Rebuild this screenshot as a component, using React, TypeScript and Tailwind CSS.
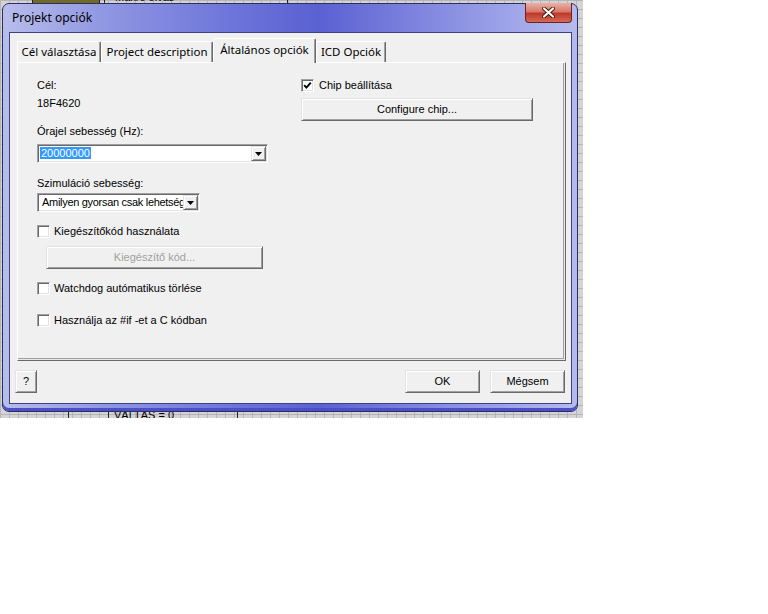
import React from "react";

function Check({ checked }: { checked?: boolean }) {
  return (
    <span className="w-[13px] h-[13px] shrink-0 bg-white border border-t-[#a0a0a0] border-l-[#a0a0a0] border-r-white border-b-white shadow-[inset_1px_1px_0_#696969,inset_-1px_-1px_0_#e3e3e3] flex items-center justify-center">
      {checked && (
        <svg width="9" height="9" viewBox="0 0 9 9">
          <path d="M1.2 4.2 L3.4 6.6 L7.8 1.6" fill="none" stroke="#000" strokeWidth="1.9" />
        </svg>
      )}
    </span>
  );
}

function Btn({
  children,
  className = "",
  disabled,
}: {
  children: React.ReactNode;
  className?: string;
  disabled?: boolean;
}) {
  return (
    <div
      className={`flex items-center justify-center bg-[#f0f0f0] border border-t-[#e3e3e3] border-l-[#e3e3e3] border-r-[#696969] border-b-[#696969] shadow-[inset_1px_1px_0_#ffffff,inset_-1px_-1px_0_#a0a0a0] text-[11px] leading-[13px] ${
        disabled ? "text-[#a0a0a0]" : "text-black"
      } ${className}`}
    >
      {children}
    </div>
  );
}

function DropBtn() {
  return (
    <div className="w-[15px] h-[15px] shrink-0 flex items-center justify-center bg-[#f0f0f0] border border-t-[#e3e3e3] border-l-[#e3e3e3] border-r-[#696969] border-b-[#696969] shadow-[inset_1px_1px_0_#ffffff,inset_-1px_-1px_0_#a0a0a0]">
      <svg width="7" height="4" viewBox="0 0 7 4">
        <path d="M0 0 H7 L3.5 4 Z" fill="#000" />
      </svg>
    </div>
  );
}

function Combo({ children, className = "" }: { children: React.ReactNode; className?: string }) {
  return (
    <div
      className={`h-[19px] bg-white border border-t-[#a0a0a0] border-l-[#a0a0a0] border-r-white border-b-white shadow-[inset_1px_1px_0_#696969,inset_-1px_-1px_0_#e3e3e3] flex items-center pl-[2px] pr-[1px] ${className}`}
    >
      <div className="flex-1 min-w-0 overflow-hidden whitespace-nowrap text-[11px] leading-[13px] text-black">
        {children}
      </div>
      <DropBtn />
    </div>
  );
}

function Tab({ label, w, active }: { label: string; w: string; active?: boolean }) {
  return (
    <div
      className={`${w} flex items-center justify-center bg-[#f0f0f0] border-t border-l border-t-white border-l-white border-r border-r-[#696969] shadow-[inset_-1px_0_0_#a0a0a0] rounded-t-[2px] text-[11.5px] text-black whitespace-nowrap ${
        active ? "h-[25px] -mb-px relative z-10 pb-[3px]" : "h-[21px]"
      }`}
    >
      {label}
    </div>
  );
}

export default function App() {
  const ui = "font-['Liberation_Sans',Arial,sans-serif]";
  const seg = "font-['Noto_Sans',sans-serif]";
  return (
    <div className="w-[768px] h-[614px] bg-white">
      <div className="relative w-[583px] h-[418px] overflow-hidden bg-[#d4d4d6] bg-[linear-gradient(#b4b4ba_1px,transparent_1px),linear-gradient(90deg,#b4b4ba_1px,transparent_1px)] bg-[length:9px_9px]">
        {/* canvas items behind the dialog */}
        <div className="absolute left-[32px] top-[-10px] w-[68px] h-[14px] bg-[#6f6a2a] border border-[#222]" />
        <div className="absolute left-[104px] top-[-10px] w-[120px] h-[14px] border-l border-[#222]" />
        <div className={`absolute left-[115px] top-[-8px] text-[11px] leading-[11px] text-black ${ui}`}>
          Makró olvas
        </div>
        <div className="absolute left-[287px] top-[-10px] h-[14px] border-l border-[#222]" />
        <div className="absolute left-[68px] top-[408px] h-[12px] border-l border-[#222]" />
        <div className="absolute left-[108px] top-[408px] h-[12px] border-l border-[#222]" />
        <div className="absolute left-[237px] top-[408px] h-[12px] border-l border-[#222]" />
        <div className={`absolute left-[114px] top-[410px] text-[11px] leading-[11px] text-black ${ui}`}>
          VÁLTÁS = 0
        </div>

        {/* dialog window */}
        <div className="absolute left-[2px] top-[3px] w-[576px] h-[409px] rounded-[7px] border border-[#2c2f5c] bg-[linear-gradient(90deg,#b7bdeb_0%,#8f96e2_18%,#6d75da_40%,#5a61d2_55%,#8e94e3_80%,#b6bbee_100%)] flex flex-col pl-[6px] pr-[5px] pb-[7px] shadow-[inset_0_-3px_0_#4b50c8]">
          <div className="h-[28px] shrink-0 flex items-center relative">
            <span className={`pl-[3px] text-[12px] text-black ${seg}`}>Projekt opciók</span>
            <div className="absolute right-[0px] top-[-1px] w-[47px] h-[20px] rounded-b-[4px] border border-[#6b2420] border-t-0 bg-[linear-gradient(180deg,#eab1a6_0%,#d77a6c_45%,#c0392b_55%,#d56a55_100%)] flex items-center justify-center">
              <svg width="13" height="11" viewBox="0 0 13 11">
                <path d="M2 1.5 L11 9.5 M11 1.5 L2 9.5" stroke="#4a1410" strokeWidth="4" strokeLinecap="round" />
                <path d="M2 1.5 L11 9.5 M11 1.5 L2 9.5" stroke="#ffffff" strokeWidth="2.2" strokeLinecap="round" />
              </svg>
            </div>
          </div>

          {/* client area */}
          <div className={`flex-1 bg-[#f0f0f0] border border-[#3e437e] flex flex-col ${ui}`}>
            {/* tabs */}
            <div className={`flex items-end pl-[7px] pt-[5px] ${seg}`}>
              <Tab label="Cél választása" w="w-[84px]" />
              <Tab label="Project description" w="w-[112px]" />
              <Tab label="Általános opciók" w="w-[103px]" active />
              <Tab label="ICD Opciók" w="w-[70px]" />
            </div>

            {/* tab panel */}
            <div className="ml-[7px] w-[549px] h-[299px] bg-[#f0f0f0] border border-t-white border-l-white border-r-[#696969] border-b-[#696969] shadow-[inset_-1px_-1px_0_#e8e8e8,inset_-2px_-2px_0_#a0a0a0] flex pt-[16px] pl-[19px]">
              {/* left column */}
              <div className="w-[264px] flex flex-col text-[11px] leading-[13px] text-black">
                <div>Cél:</div>
                <div className="mt-[5px]">18F4620</div>
                <div className="mt-[15px]">Órajel sebesség (Hz):</div>
                <Combo className="mt-[6px] w-[231px]">
                  <span className="bg-[#3399ff] text-white px-px">20000000</span>
                </Combo>
                <div className="mt-[14px]">Szimuláció sebesség:</div>
                <Combo className="mt-[3px] w-[163px]">
                  <span className="pl-[2px] tracking-[-0.3px]">Amilyen gyorsan csak lehetség</span>
                </Combo>
                <div className="mt-[13px] flex items-center gap-[4px]">
                  <Check />
                  <span>Kiegészítőkód használata</span>
                </div>
                <Btn disabled className="mt-[8px] ml-[9px] w-[217px] h-[23px]">
                  Kiegészítő kód...
                </Btn>
                <div className="mt-[13px] flex items-center gap-[4px]">
                  <Check />
                  <span>Watchdog autómatikus törlése</span>
                </div>
                <div className="mt-[19px] flex items-center gap-[4px]">
                  <Check />
                  <span>Használja az #if -et a C kódban</span>
                </div>
              </div>

              {/* right column */}
              <div className="flex flex-col text-[11px] leading-[13px] text-black">
                <div className="flex items-center gap-[5px]">
                  <Check checked />
                  <span>Chip beállítása</span>
                </div>
                <Btn className="mt-[6px] w-[232px] h-[23px]">Configure chip...</Btn>
              </div>
            </div>

            {/* bottom buttons */}
            <div className="flex items-start mt-[9px] pl-[5px] pr-[6px]">
              <Btn className="w-[22px] h-[23px]">?</Btn>
              <div className="flex-1" />
              <Btn className="w-[75px] h-[23px]">OK</Btn>
              <Btn className="ml-[10px] w-[75px] h-[23px]">Mégsem</Btn>
            </div>
          </div>
        </div>
      </div>
    </div>
  );
}
